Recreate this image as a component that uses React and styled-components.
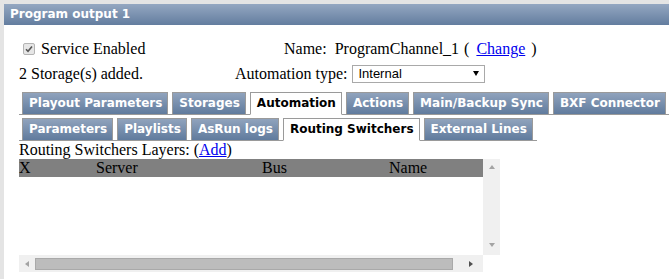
import React from 'react'
import styled, { createGlobalStyle } from "styled-components";

const GlobalStyle = createGlobalStyle`
  html, body {
    margin: 0;
    background: #fff;
  }
  body {
    font-family: "Liberation Serif", "Times New Roman", serif;
    font-size: 16px;
    color: #000;
    overflow: hidden;
  }
`;

const topTabs = ["Playout Parameters", "Storages", "Automation", "Actions", "Main/Backup Sync", "BXF Connector"];
const subTabs = ["Parameters", "Playlists", "AsRun logs", "Routing Switchers", "External Lines"];

const Frame = styled.div`
  border-top: 4px solid #e4e4e4;
  border-left: 4px solid #e4e4e4;
  min-height: 100vh;
  box-sizing: border-box;
`;

const Header = styled.div`
  height: 21px;
  line-height: 21px;
  padding-left: 6px;
  background: linear-gradient(to bottom, #94a7c1, #637d9f);
  color: #fff;
  font-family: "DejaVu Sans", Verdana, sans-serif;
  font-weight: bold;
  font-size: 12px;
`;

const Body = styled.div`
  padding: 11px 0 0 15px;
`;

const InfoGrid = styled.div`
  display: grid;
  grid-template-columns: 216px 1fr;
  grid-auto-rows: 25px;
  align-items: center;
`;

const Cell = styled.div`
  display: flex;
  align-items: center;
  padding-left: ${p => p.$indent || 0}px;
  white-space: nowrap;
`;

const CheckBox = styled.span`
  width: 12px;
  height: 12px;
  margin: 0 6px 0 4px;
  border: 1px solid #b4b4b4;
  border-radius: 2px;
  background: #e6e6e6;
  display: inline-flex;
  align-items: center;
  justify-content: center;
  box-sizing: border-box;
`;

const Gap = styled.span`
  display: inline-block;
  width: ${p => p.$w}px;
`;

const Link = styled.a`
  color: #0000ee;
  text-decoration: underline;
  cursor: pointer;
`;

const Select = styled.div`
  margin-left: 5px;
  width: 133px;
  height: 18px;
  box-sizing: border-box;
  border: 1px solid #a9a9a9;
  display: flex;
  align-items: center;
  justify-content: space-between;
  padding: 0 5px 0 5px;
  font-family: "Liberation Sans", Arial, sans-serif;
  font-size: 13px;
`;

const DropArrow = styled.span`
  width: 0;
  height: 0;
  border-left: 3px solid transparent;
  border-right: 3px solid transparent;
  border-top: 5px solid #000;
`;

const TabBar = styled.div`
  display: inline-flex;
  align-items: flex-end;
  padding: 0 4px 0 3px;
  border-bottom: 1px solid #9a9a9a;
  margin-top: ${p => p.$top || 0}px;
`;

const TabBlock = styled.div`
  display: flex;
  flex-direction: column;
  align-items: flex-start;
`;

const Tab = styled.div`
  height: 21px;
  line-height: 21px;
  padding: 0 5px 0 6px;
  margin-right: 4px;
  margin-bottom: -1px;
  border: 1px solid #9a9a9a;
  border-bottom: ${p => (p.$active ? "1px solid #fff" : "1px solid #9a9a9a")};
  background: ${p => (p.$active ? "#fff" : "linear-gradient(to bottom, #90a3bd, #607b9d)")};
  color: ${p => (p.$active ? "#000" : "#fff")};
  font-family: "DejaVu Sans", Verdana, sans-serif;
  font-weight: bold;
  font-size: 12px;
  white-space: nowrap;
  &:last-child {
    margin-right: 0;
  }
`;

const LayersLine = styled.div`
  line-height: 18px;
`;

const ScrollBox = styled.div`
  display: grid;
  grid-template-columns: 464px 17px;
  grid-template-rows: 96px 17px;
  width: 481px;
`;

const Viewport = styled.div`
  background: #fff;
`;

const HeadRow = styled.div`
  display: grid;
  grid-template-columns: 77px 166px 127px 1fr;
  height: 18px;
  line-height: 18px;
  background: #808080;
`;

const VBar = styled.div`
  background: #f0f0f0;
  display: flex;
  flex-direction: column;
  justify-content: space-between;
  align-items: center;
  padding: 6px 0 8px;
  box-sizing: border-box;
`;

const HBar = styled.div`
  background: #f0f0f0;
  display: flex;
  align-items: center;
  padding: 0 6px 0 6px;
  box-sizing: border-box;
`;

const Corner = styled.div`
  background: #fff;
`;

const Arrow = styled.span`
  width: 0;
  height: 0;
  border-style: solid;
  border-color: transparent;
  ${p => p.$dir === "up" && `border-width: 0 3.5px 4px; border-bottom-color: ${p.$color};`}
  ${p => p.$dir === "down" && `border-width: 4px 3.5px 0; border-top-color: ${p.$color};`}
  ${p => p.$dir === "left" && `border-width: 3.5px 4px 3.5px 0; border-right-color: ${p.$color};`}
  ${p => p.$dir === "right" && `border-width: 3.5px 0 3.5px 4px; border-left-color: ${p.$color};`}
`;

const Thumb = styled.div`
  flex: none;
  width: 418px;
  height: 12px;
  margin: 0 16px 0 6px;
  background: #bcbcbc;
  border: 1px solid #a9a9a9;
  box-sizing: border-box;
`;

function App() {
  return (
    <>
      <GlobalStyle />
      <Frame>
        <Header>Program output 1</Header>
        <Body>
          <InfoGrid>
            <Cell>
              <CheckBox>
                <svg width="8" height="8" viewBox="0 0 8 8">
                  <path d="M1 4.2 L3 6.2 L7 1.5" stroke="#555" strokeWidth="1.6" fill="none" />
                </svg>
              </CheckBox>
              Service Enabled
            </Cell>
            <Cell $indent={49}>
              Name:<Gap $w={8} />ProgramChannel_1<Gap $w={5} />(<Gap $w={7} /><Link>Change</Link><Gap $w={6} />)
            </Cell>
            <Cell>2 Storage(s) added.</Cell>
            <Cell>
              Automation type:
              <Select>
                Internal
                <DropArrow />
              </Select>
            </Cell>
          </InfoGrid>

          <TabBlock>
            <TabBar $top={6}>
              {topTabs.map(t => (
                <Tab key={t} $active={t === "Automation"}>{t}</Tab>
              ))}
            </TabBar>
            <TabBar $top={3}>
              {subTabs.map(t => (
                <Tab key={t} $active={t === "Routing Switchers"}>{t}</Tab>
              ))}
            </TabBar>
          </TabBlock>

          <LayersLine>
            Routing Switchers Layers: (<Link>Add</Link>)
          </LayersLine>

          <ScrollBox>
            <Viewport>
              <HeadRow>
                <span>X</span>
                <span>Server</span>
                <span>Bus</span>
                <span>Name</span>
              </HeadRow>
            </Viewport>
            <VBar>
              <Arrow $dir="up" $color="#a3a3a3" />
              <Arrow $dir="down" $color="#a3a3a3" />
            </VBar>
            <HBar>
              <Arrow $dir="left" $color="#a3a3a3" />
              <Thumb />
              <Arrow $dir="right" $color="#505050" />
            </HBar>
            <Corner />
          </ScrollBox>
        </Body>
      </Frame>
    </>
  )
}

export default App;
